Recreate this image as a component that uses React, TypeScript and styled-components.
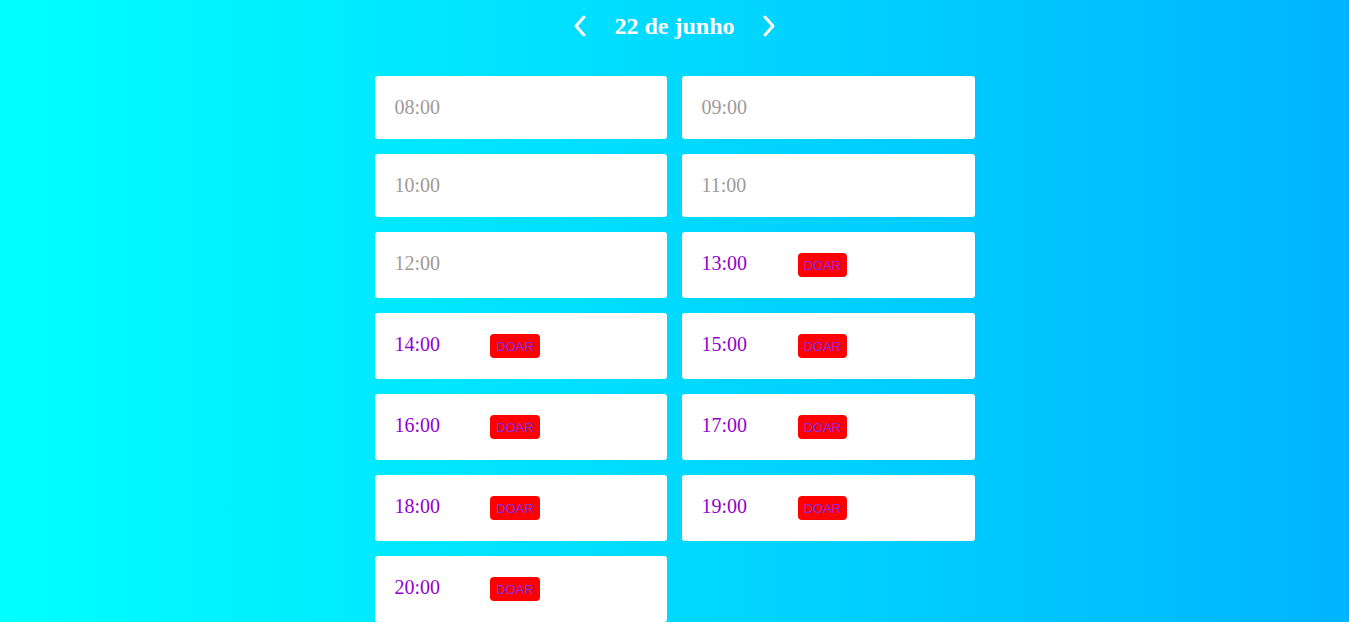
import React from "react";
import styled, { createGlobalStyle } from "styled-components";

const GlobalStyle = createGlobalStyle`
  html, body { margin: 0; padding: 0; }
  body {
    font-family: "Liberation Serif", "Times New Roman", serif;
    background: linear-gradient(to right, #00ffff, #00b4ff);
    min-height: 100vh;
  }
`;

const Page = styled.div`
  min-height: 100vh;
  display: flex;
  flex-direction: column;
  align-items: center;
`;

const Header = styled.div`
  height: 52px;
  display: flex;
  align-items: center;
  justify-content: center;
  gap: 28px;
  margin-bottom: 24px;
`;

const NavButton = styled.button`
  background: none;
  border: none;
  padding: 0;
  display: flex;
  align-items: center;
  cursor: pointer;
`;

const DateTitle = styled.h2`
  margin: 0;
  color: #ffffff;
  font-size: 24px;
  font-weight: bold;
  font-family: "Liberation Serif", "Times New Roman", serif;
`;

const Grid = styled.div`
  width: 600px;
  display: grid;
  grid-template-columns: 292px 293px;
  column-gap: 15px;
  row-gap: 15px;
`;

const Card = styled.div`
  background: #ffffff;
  border-radius: 3px;
  padding: 20px;
  display: flex;
  align-items: flex-start;
`;

const Time = styled.span<{ $available: boolean }>`
  width: 38%;
  font-size: 20px;
  line-height: 23px;
  color: ${(p) => (p.$available ? "#9400d3" : "#a09a9a")};
`;

const Donate = styled.button`
  background: #ff0000;
  color: #8a2be2;
  border: none;
  border-radius: 4px;
  height: 24px;
  margin: 1px 0;
  padding: 0 6px;
  font-family: "Liberation Sans", Arial, sans-serif;
  font-size: 13px;
  cursor: pointer;
`;

const Chevron = ({ dir }: { dir: "left" | "right" }) => (
  <svg width="12" height="22" viewBox="0 0 12 22" fill="none">
    <path
      d={dir === "left" ? "M10 2 L2 11 L10 20" : "M2 2 L10 11 L2 20"}
      stroke="#ffffff"
      strokeWidth="3"
      strokeLinecap="round"
      strokeLinejoin="round"
    />
  </svg>
);

const slots = [
  { t: "08:00", a: false },
  { t: "09:00", a: false },
  { t: "10:00", a: false },
  { t: "11:00", a: false },
  { t: "12:00", a: false },
  { t: "13:00", a: true },
  { t: "14:00", a: true },
  { t: "15:00", a: true },
  { t: "16:00", a: true },
  { t: "17:00", a: true },
  { t: "18:00", a: true },
  { t: "19:00", a: true },
  { t: "20:00", a: true },
];

export default function App() {
  return (
    <>
      <GlobalStyle />
      <Page>
        <Header>
          <NavButton aria-label="anterior">
            <Chevron dir="left" />
          </NavButton>
          <DateTitle>22 de junho</DateTitle>
          <NavButton aria-label="próximo">
            <Chevron dir="right" />
          </NavButton>
        </Header>
        <Grid>
          {slots.map((s) => (
            <Card key={s.t}>
              <Time $available={s.a}>{s.t}</Time>
              {s.a && <Donate>DOAR</Donate>}
            </Card>
          ))}
        </Grid>
      </Page>
    </>
  );
}
